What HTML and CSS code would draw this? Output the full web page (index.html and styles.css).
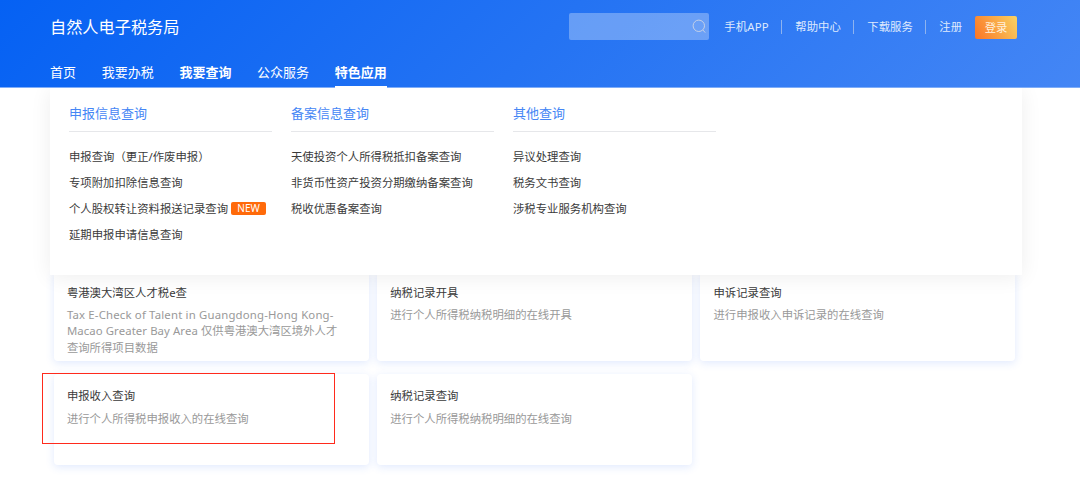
FILE: index.html
```html
<!doctype html>
<html lang="zh-CN">
    <head>
        <meta charset="UTF-8" />
        <meta name="viewport" content="width=device-width, initial-scale=1.0" />
        <title>自然人电子税务局</title>
        <link rel="stylesheet" href="styles.css">
    </head>
    <body>
        <header class="header">
            <div class="header-top">
                <div class="logo">自然人电子税务局</div>
                <div class="search">
                    <svg class="search-icon" viewBox="0 0 14 15" fill="none" stroke="currentColor">
                        <circle cx="6.8" cy="6.8" r="5.7" />
                        <path d="M10.8 10.9 L13.2 13.6" />
                    </svg>
                </div>
                <div class="top-links">
                    <a class="top-link">手机APP</a>
                    <a class="top-link">帮助中心</a>
                    <a class="top-link">下载服务</a>
                    <a class="top-link">注册</a>
                </div>
                <a class="login">登录</a>
            </div>
            <nav class="nav">
                <a class="nav-item">首页</a>
                <a class="nav-item">我要办税</a>
                <a class="nav-item current">我要查询</a>
                <a class="nav-item">公众服务</a>
                <a class="nav-item current underlined">特色应用</a>
            </nav>

            <div class="dropdown">
                <div class="menu-group">
                    <h3>申报信息查询</h3>
                    <ul>
                        <li>申报查询（更正/作废申报）</li>
                        <li>专项附加扣除信息查询</li>
                        <li>个人股权转让资料报送记录查询<span class="badge">NEW</span></li>
                        <li>延期申报申请信息查询</li>
                    </ul>
                </div>
                <div class="menu-group">
                    <h3>备案信息查询</h3>
                    <ul>
                        <li>天使投资个人所得税抵扣备案查询</li>
                        <li>非货币性资产投资分期缴纳备案查询</li>
                        <li>税收优惠备案查询</li>
                    </ul>
                </div>
                <div class="menu-group">
                    <h3>其他查询</h3>
                    <ul>
                        <li>异议处理查询</li>
                        <li>税务文书查询</li>
                        <li>涉税专业服务机构查询</li>
                    </ul>
                </div>
            </div>
        </header>

        <main class="cards">
            <div class="card">
                <h4>粤港澳大湾区人才税e查</h4>
                <p><span class="latin">Tax E-Check of Talent in Guangdong-Hong Kong-</span><br><span class="latin-tight">Macao Greater Bay Area </span>仅供粤港澳大湾区境外人才<br>查询所得项目数据</p>
            </div>
            <div class="card">
                <h4>纳税记录开具</h4>
                <p>进行个人所得税纳税明细的在线开具</p>
            </div>
            <div class="card">
                <h4>申诉记录查询</h4>
                <p>进行申报收入申诉记录的在线查询</p>
            </div>
            <div class="card">
                <h4>申报收入查询</h4>
                <p>进行个人所得税申报收入的在线查询</p>
                <div class="highlight"></div>
            </div>
            <div class="card">
                <h4>纳税记录查询</h4>
                <p>进行个人所得税纳税明细的在线查询</p>
            </div>
        </main>
    </body>
</html>
```
FILE: styles.css
```css
* {
    margin: 0;
    padding: 0;
    box-sizing: border-box;
}
body {
    font-family: "Noto Sans", "Noto Sans CJK SC", sans-serif;
    font-size: 11.37px;
    color: #3a3a3a;
    background-color: #ffffff;
    height: 492px;
    overflow: hidden;
}
.header {
    position: relative;
    z-index: 2;
    height: 88px;
    padding: 0 63px 0 50px;
    border-bottom: 1px solid #7fadf8;
    background: linear-gradient(135deg, #0561f3 0%, #2473f3 50%, #4486f5 100%);
    color: #ffffff;
}
.header-top {
    display: flex;
    align-items: center;
    height: 53px;
}
.logo {
    margin-right: auto;
    font-size: 16.2px;
    line-height: 22px;
}
.search {
    display: flex;
    align-items: center;
    justify-content: flex-end;
    width: 140px;
    height: 27px;
    padding-right: 3px;
    border-radius: 2px;
    background-color: rgba(255, 255, 255, 0.3);
}
.search-icon {
    width: 14px;
    height: 15px;
    margin-bottom: 1px;
    color: #c3d0e8;
    stroke-width: 1;
}
.top-links {
    display: flex;
    align-items: center;
    margin-left: 15.5px;
    line-height: 16px;
    color: #dfeafd;
}
.top-link {
    display: flex;
    align-items: center;
}
.top-link:first-child {
    letter-spacing: 0.2px;
}
.top-link + .top-link::before {
    content: "";
    width: 1px;
    height: 14px;
    margin: 0 13px 0 12.5px;
    background-color: #8eb3ef;
}
.login {
    width: 42px;
    height: 23px;
    margin: 0 0 -1px 13px;
    border-radius: 2px;
    line-height: 23px;
    text-align: center;
    color: #fff0dc;
    background: linear-gradient(60deg, #fb7424, #f9d363);
}
.nav {
    display: flex;
    gap: 25.7px;
    height: 35px;
    font-size: 13px;
    line-height: 38px;
}
.current {
    font-weight: 700;
}
.underlined {
    border-bottom: 2px solid #ffffff;
}
.dropdown {
    position: absolute;
    top: 88px;
    left: 50px;
    display: flex;
    gap: 19px;
    width: 972px;
    height: 187px;
    padding: 12px 19px;
    background-color: #ffffff;
    color: #3a3a3a;
    box-shadow: 0 2px 20px rgba(0, 0, 0, 0.07);
    clip-path: inset(0 -30px -40px -30px);
}
.menu-group {
    width: 203px;
}
.menu-group h3 {
    height: 32px;
    border-bottom: 1px solid #e6e7ea;
    font-size: 13px;
    font-weight: 400;
    line-height: 27px;
    color: #4586f5;
}
.menu-group ul {
    margin-top: 11px;
    list-style: none;
}
.menu-group li {
    display: flex;
    align-items: center;
    height: 26px;
    white-space: nowrap;
}
.badge {
    width: 35px;
    height: 13px;
    margin: 1px 0 0 3px;
    border-radius: 2px;
    background-color: #ff6a0a;
    color: #ffffff;
    font-size: 10px;
    line-height: 13px;
    text-align: center;
}
.cards {
    display: grid;
    grid-template-columns: repeat(3, 315px);
    grid-auto-rows: 90.5px;
    gap: 13.2px 8.3px;
    margin: 182.6px 0 0 53.9px;
}
.card {
    position: relative;
    padding: 13px;
    border-radius: 4px;
    background-color: #ffffff;
    box-shadow: 0 2px 9px rgba(50, 110, 250, 0.15);
}
.card h4 {
    font-size: 11.37px;
    font-weight: 400;
    line-height: 17px;
}
.card p {
    margin-top: 6.5px;
    line-height: 16.3px;
    color: #999999;
    white-space: nowrap;
}
.latin {
    letter-spacing: 0.18px;
}
.latin-tight {
    letter-spacing: 0.09px;
}
/* red frame around the entry to click */
.highlight {
    position: absolute;
    top: -1px;
    left: -12px;
    width: 293.5px;
    height: 71px;
    border: 1px solid #ff2a1c;
}
```
